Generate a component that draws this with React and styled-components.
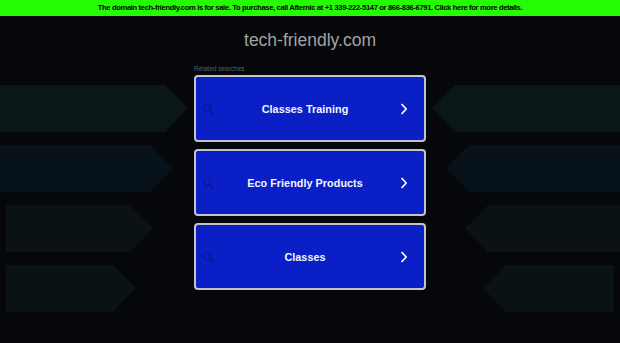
import React from "react";
import styled, { createGlobalStyle } from "styled-components";

const Global = createGlobalStyle`
  html, body { margin: 0; padding: 0; background: #05070b; }
  body { font-family: "Liberation Sans", Arial, sans-serif; }
`;

const Page = styled.div`
  width: 620px;
  height: 343px;
  background: #05070b;
  overflow: hidden;
`;

const SaleBar = styled.div`
  height: 16px;
  background: #24fb05;
  color: #000;
  font-size: 7.6px;
  font-weight: 700;
  line-height: 16px;
  text-align: center;
  letter-spacing: -0.35px;
  white-space: nowrap;
`;

const Title = styled.h1`
  margin: 0;
  height: 46px;
  padding-top: 14px;
  box-sizing: border-box;
  color: #a3a3a3;
  font-size: 17.5px;
  font-weight: 400;
  text-align: center;
  line-height: 20px;
`;

const Main = styled.div`
  display: grid;
  grid-template-columns: 194px 232px 194px;
`;

const Side = styled.div`
  display: flex;
  flex-direction: column;
  gap: 13px;
  padding-top: 23px;
`;

const Arrow = styled.div`
  height: 47px;
  background: ${(p) => p.$color};
  width: ${(p) => p.$width}px;
  margin-left: ${(p) => p.$offset}px;
  clip-path: ${(p) =>
    p.$dir === "right"
      ? "polygon(0 0, calc(100% - 23px) 0, 100% 50%, calc(100% - 23px) 100%, 0 100%)"
      : "polygon(23px 0, 100% 0, 100% 100%, 23px 100%, 0 50%)"};
`;

const Center = styled.div`
  display: flex;
  flex-direction: column;
`;

const Label = styled.div`
  height: 13px;
  color: #5b6068;
  font-size: 6.5px;
  line-height: 13px;
`;

const Cards = styled.div`
  display: flex;
  flex-direction: column;
  gap: 7px;
`;

const Card = styled.a`
  box-sizing: border-box;
  height: 67px;
  border: 2px solid #c4c4c8;
  border-radius: 4px;
  background: #0a1fc6;
  display: grid;
  grid-template-columns: 30px 1fr 30px;
  align-items: center;
  padding: 0 16px 0 6px;
  color: #fff;
  text-decoration: none;
`;

const CardText = styled.span`
  text-align: center;
  font-size: 10.8px;
  font-weight: 700;
  letter-spacing: 0.05px;
  color: #f4f6ff;
`;

const IconBox = styled.span`
  display: flex;
  justify-content: ${(p) => (p.$end ? "flex-end" : "flex-start")};
  align-items: center;
`;

const SearchIcon = () => (
  <svg width="12" height="12" viewBox="0 0 12 12" fill="none">
    <circle cx="5" cy="5" r="3.6" stroke="#0a1899" strokeWidth="1.4" />
    <line x1="7.6" y1="7.6" x2="11" y2="11" stroke="#0a1899" strokeWidth="1.6" strokeLinecap="round" />
  </svg>
);

const Chevron = () => (
  <svg width="8" height="12" viewBox="0 0 8 12" fill="none">
    <polyline points="2,1.5 6.2,6 2,10.5" stroke="#ffffff" strokeWidth="1.7" strokeLinecap="round" strokeLinejoin="round" />
  </svg>
);

const leftArrows = [
  { w: 188, o: 0, c: "#0b1619" },
  { w: 173, o: 0, c: "#08121a" },
  { w: 147, o: 6, c: "#0a1215" },
  { w: 130, o: 6, c: "#0a1214" },
];

const rightArrows = [
  { w: 188, o: 6, c: "#0b1619" },
  { w: 174, o: 20, c: "#08121a" },
  { w: 155, o: 39, c: "#0a1215" },
  { w: 131, o: 57, c: "#0a1214" },
];

const items = ["Classes Training", "Eco Friendly Products", "Classes"];

export default function App() {
  return (
    <Page>
      <Global />
      <SaleBar>
        The domain tech-friendly.com is for sale. To purchase, call Afternic at +1 339-222-5147 or 866-836-6791. Click here for more details.
      </SaleBar>
      <Title>tech-friendly.com</Title>
      <Main>
        <Side>
          {leftArrows.map((a, i) => (
            <Arrow key={i} $dir="right" $width={a.w} $offset={a.o} $color={a.c} />
          ))}
        </Side>
        <Center>
          <Label>Related searches</Label>
          <Cards>
            {items.map((t) => (
              <Card key={t} href="#">
                <IconBox>
                  <SearchIcon />
                </IconBox>
                <CardText>{t}</CardText>
                <IconBox $end>
                  <Chevron />
                </IconBox>
              </Card>
            ))}
          </Cards>
        </Center>
        <Side>
          {rightArrows.map((a, i) => (
            <Arrow key={i} $dir="left" $width={a.w} $offset={a.o} $color={a.c} />
          ))}
        </Side>
      </Main>
    </Page>
  );
}
